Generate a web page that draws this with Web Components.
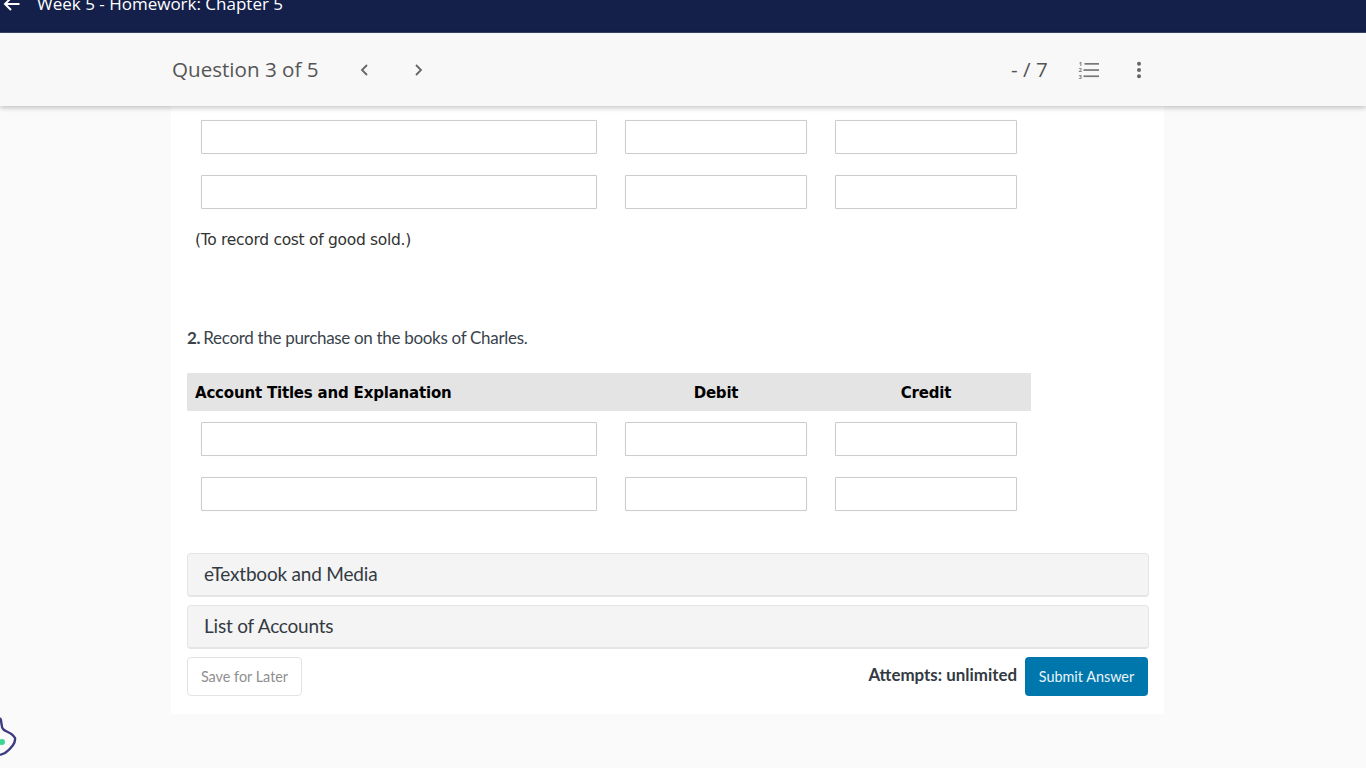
<!DOCTYPE html>
<html><head><meta charset="utf-8"><style>
html,body{margin:0;height:768px;overflow:hidden;background:#fafafa;font-family:"Lato",sans-serif}
</style></head><body>
<template id="t-bar"><style>
:host{display:flex;align-items:flex-end;height:32px;background:#14204a;border-bottom:1px solid #3a4468;overflow:hidden;color:#fff;font:500 17px/20px "Open Sans",sans-serif;box-sizing:content-box}
.in{display:flex;align-items:center;gap:17px;padding:0 0 18px 3px}
svg{display:block;width:17px;height:14px}
</style><div class="in"><svg viewBox="0 0 17 14" fill="none" stroke="#fff" stroke-width="2"><path d="M16.5 7H2M8 1 2 7l6 6"/></svg><slot></slot></div></template>

<template id="t-head"><style>
:host{display:flex;align-items:center;height:73px;background:#f8f8f8;box-shadow:0 2px 5px rgba(0,0,0,.22);position:relative;z-index:2;padding:0 0 0 172px;color:#555;font-family:"Open Sans",sans-serif}
.q{font-size:20.6px;width:187px;margin-top:-2px}
.nav{display:flex;gap:44.5px;align-items:center}
.nav svg{display:block;width:10px;height:14px}
.sp{flex:1}
.r{display:flex;align-items:center;width:355px}
.s{font-size:20.6px;width:67px;white-space:pre;margin-top:-1px}
text{font:bold 6px "Open Sans",sans-serif;fill:#777}
</style>
<div class="q"><slot name="q"></slot></div>
<div class="nav">
<svg viewBox="0 0 10 14" fill="none" stroke="#666" stroke-width="1.8"><path d="M8 2 3 7l5 5"/></svg>
<svg viewBox="0 0 10 14" fill="none" stroke="#666" stroke-width="1.8"><path d="M2 2l5 5-5 5"/></svg>
</div>
<div class="sp"></div>
<div class="r"><div class="s"><slot name="s"></slot></div>
<svg width="22" height="22" viewBox="0 -2 22 22" fill="#777" style="display:block"><rect x="6.5" y="2" width="14.5" height="1.7"/><rect x="5.5" y="8.2" width="15.5" height="1.7"/><rect x="5.5" y="14.4" width="15.5" height="1.7"/><text x="0.8" y="5">1</text><text x="0.4" y="11.2">2</text><text x="0.4" y="17.6">3</text></svg>
<svg width="6" height="18" viewBox="0 0 6 18" fill="#666" style="display:block;margin-left:36px"><circle cx="3" cy="2.7" r="2"/><circle cx="3" cy="9" r="2"/><circle cx="3" cy="15.3" r="2"/></svg>
</div></template>

<template id="t-card"><style>
:host{display:block;width:962px;margin-left:171px;background:#fff;padding:14px 15px 18px 16px;height:576px;box-sizing:content-box}
</style><slot></slot></template>

<template id="t-row"><style>
:host{display:grid;grid-template-columns:424px 210px 210px;width:844px;margin-bottom:21px}
i{display:block;height:34px;box-sizing:border-box;margin:0 14px 0 13.5px;background:#fff;border:1px solid #ccc;border-radius:1px;box-shadow:0 0 1px rgba(0,0,0,.1)}
</style><i></i><i></i><i></i></template>

<template id="t-thead"><style>
:host{display:grid;grid-template-columns:424px 210px 210px;width:844px;height:38px;align-items:center;background:#e4e4e4;margin-bottom:11px;font:bold 15px/22px "DejaVu Sans",sans-serif;color:#000;letter-spacing:-.19px}
::slotted(*){display:block;padding-top:1px}
::slotted(:not(:first-child)){text-align:center}
::slotted(:first-child){padding-left:8px}
</style><slot></slot></template>

<template id="t-acc"><style>
:host{display:flex;align-items:center;box-sizing:border-box;width:962px;height:44px;background:#f4f4f4;border:1px solid #e5e5e5;border-bottom-width:2px;border-radius:4px;padding:0 16px 1px;font:19px/24px "Lato",sans-serif;letter-spacing:-.2px;color:#333a42;margin-bottom:8px}
</style><slot></slot></template>

<template id="t-btn"><style>
:host{display:inline-flex;align-items:center;justify-content:center;box-sizing:border-box;height:39px;border-radius:4px;font:14.4px/18px "Lato",sans-serif}
:host([kind=ghost]){width:115px;border:1px solid #e3e3e3;color:#8f8f8f;background:#fff}
:host([kind=primary]){width:123px;background:#0077ac;color:#e8f3f8}
</style><slot></slot></template>

<template id="t-foot"><style>
:host{display:flex;align-items:center;width:961px;margin-top:1px}
.sp{flex:1}
.a{font:bold 16.9px/24px "Lato",sans-serif;color:#333a42;margin:-4px 8px 0 0}
</style><slot name="l"></slot><div class="sp"></div><div class="a"><slot name="a"></slot></div><slot name="r"></slot></template>

<template id="t-blob"><style>
:host{position:absolute;left:0;top:712px;width:20px;height:50px}
svg{display:block}
</style><svg width="20" height="50" viewBox="0 0 20 50" fill="none"><path d="M0 6C2 9 1 15 3 17C5 20 12 20 15 26C16 32 9 38 5 41L0 43" stroke="#3c3a80" stroke-width="2.4"/><circle cx="2" cy="30" r="3" fill="#3ed692"/></svg></template>

<wp-bar>Week 5 - Homework: Chapter 5</wp-bar>
<wp-head><span slot="q">Question 3 of 5</span><span slot="s">- / 7</span></wp-head>
<wp-card>
<wp-row></wp-row><wp-row></wp-row>
<div style="font:15.5px/20px 'DejaVu Sans',sans-serif;color:#333;margin:0 0 0 8px;letter-spacing:-.3px">(To record cost of good sold.)</div>
<div style="font:17px/22px 'Lato',sans-serif;color:#3a434c;margin:77px 0 24px 0;letter-spacing:-.31px"><b style="margin-right:-1px">2.</b> Record the purchase on the books of Charles.</div>
<wp-thead><span>Account Titles and Explanation</span><span>Debit</span><span>Credit</span></wp-thead>
<wp-row></wp-row><wp-row></wp-row>
<div style="height:21px"></div>
<wp-acc>eTextbook and Media</wp-acc>
<wp-acc>List of Accounts</wp-acc>
<wp-foot><wp-btn slot="l" kind="ghost">Save for Later</wp-btn><span slot="a">Attempts: unlimited</span><wp-btn slot="r" kind="primary">Submit Answer</wp-btn></wp-foot>
</wp-card>
<wp-blob></wp-blob>
<script>
for (const [n,t] of [['wp-bar','t-bar'],['wp-head','t-head'],['wp-card','t-card'],['wp-row','t-row'],['wp-thead','t-thead'],['wp-acc','t-acc'],['wp-btn','t-btn'],['wp-foot','t-foot'],['wp-blob','t-blob']]) {
  customElements.define(n, class extends HTMLElement {
    constructor(){super();this.attachShadow({mode:'open'}).appendChild(document.getElementById(t).content.cloneNode(true));}
  });
}
</script>
</body></html>
